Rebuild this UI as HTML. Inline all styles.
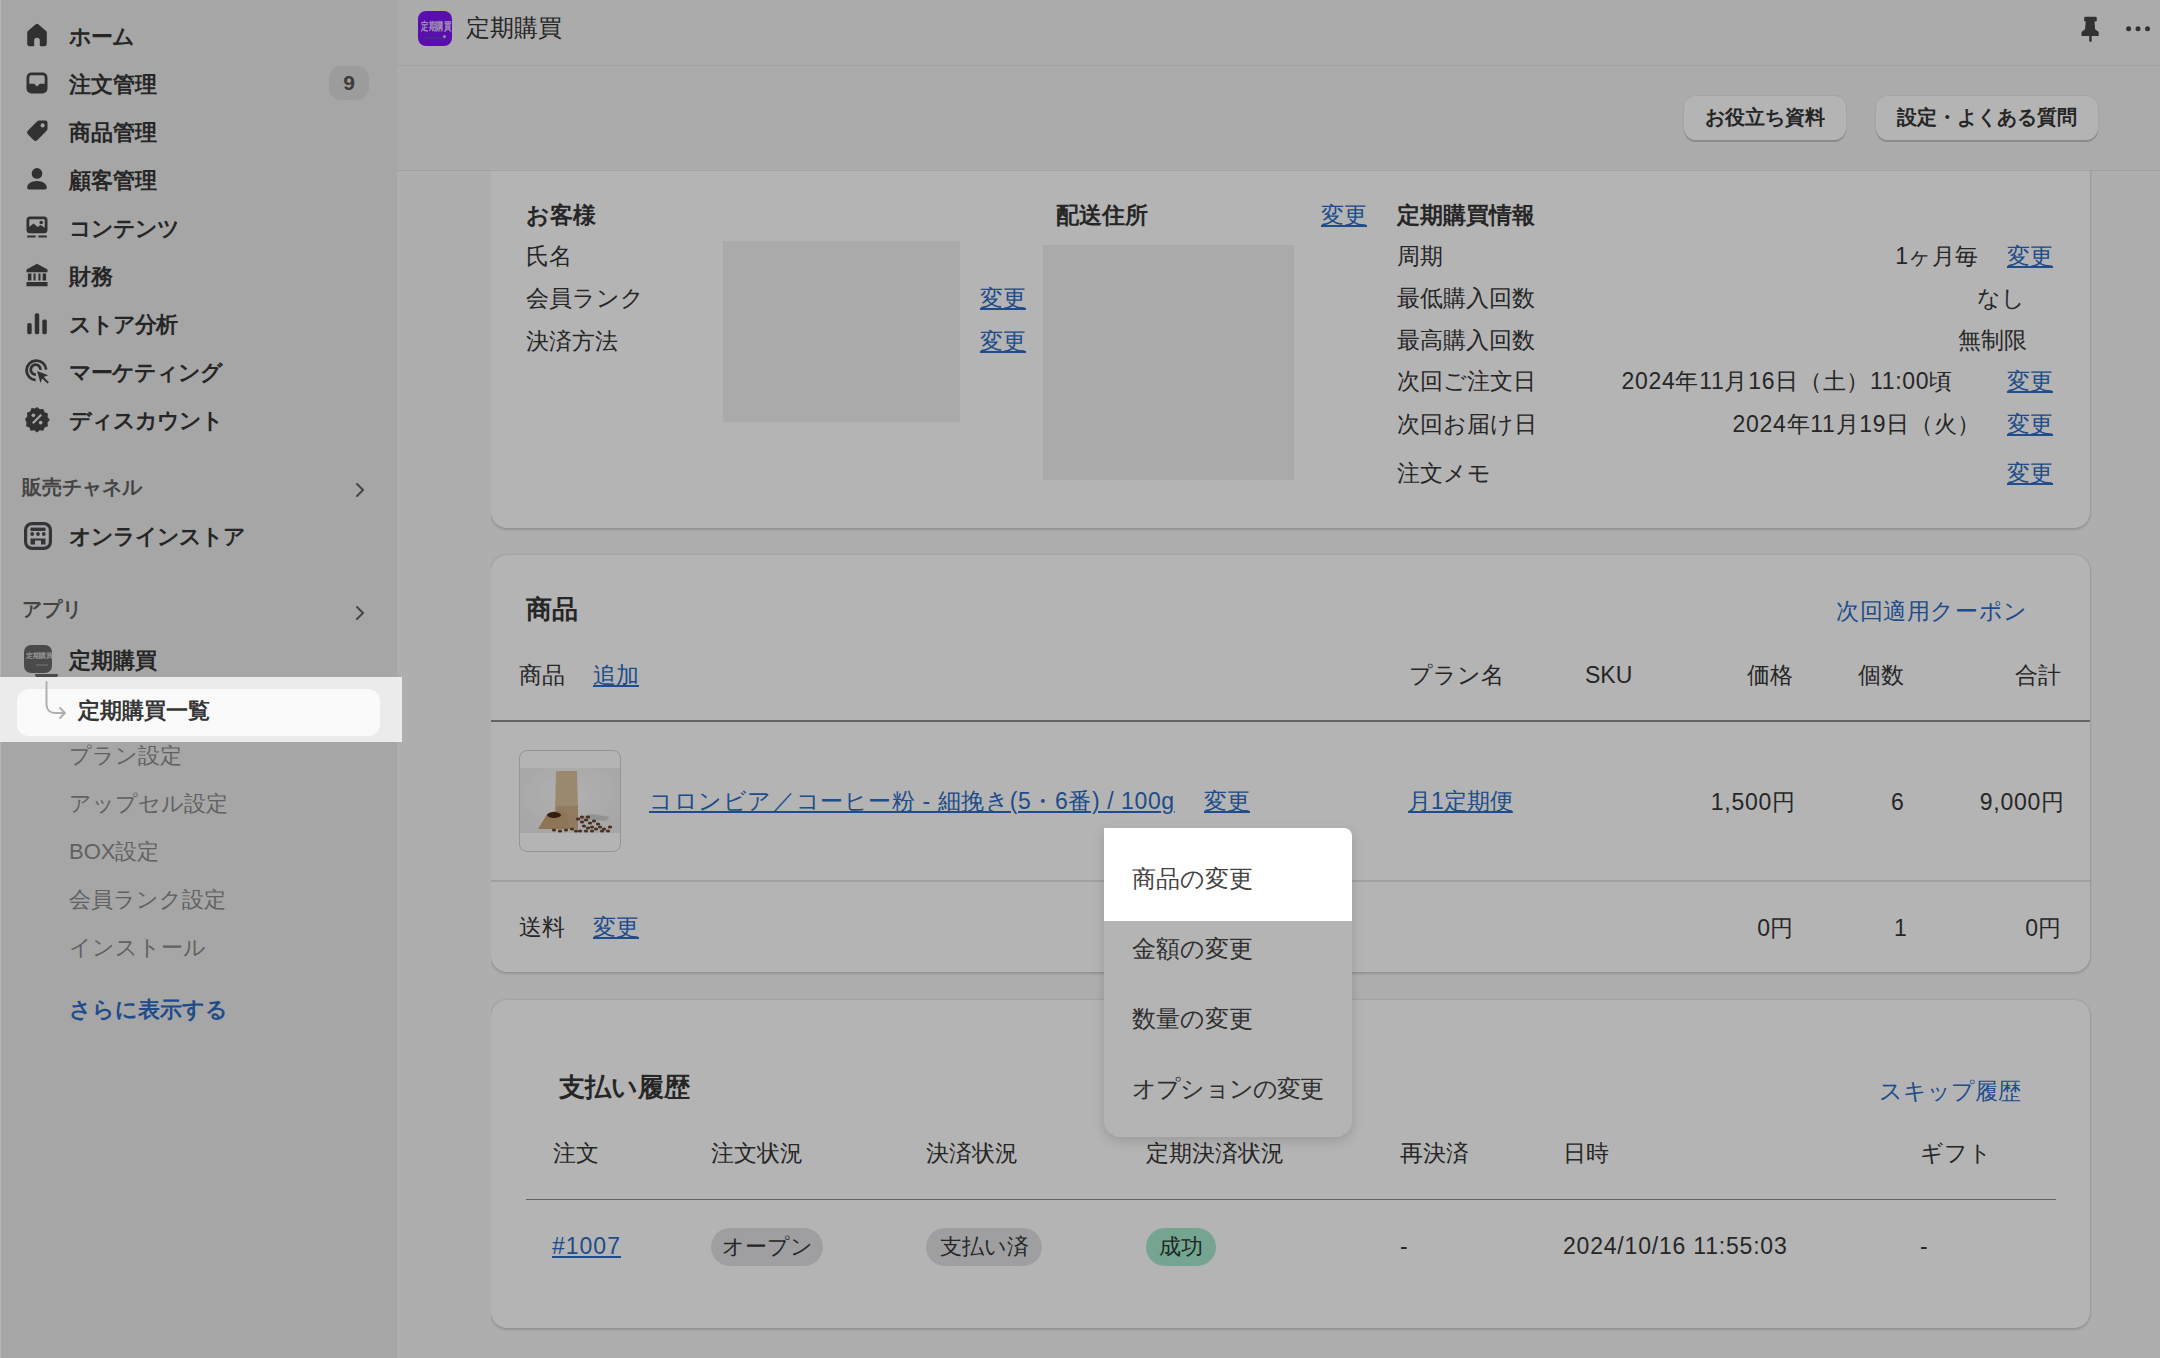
<!DOCTYPE html>
<html><head><meta charset="utf-8">
<style>
*{box-sizing:border-box;margin:0;padding:0}
html,body{width:2164px;height:1358px;overflow:hidden}
body{position:relative;background:#f7f7f7;font-family:"Liberation Sans",sans-serif;color:#363636}
.a{position:absolute}
.t{position:absolute;white-space:nowrap;line-height:32px;height:32px}
.r{text-align:right}
.lk{color:#2d6cc4;text-decoration:underline;text-underline-offset:2px;text-decoration-thickness:1.5px}
.b{font-weight:bold}
.side{left:0;top:0;width:397px;height:1358px;background:#ebebeb}
.card{background:#fff;border-radius:16px;box-shadow:0 0 3px rgba(0,0,0,.16),0 2px 3px rgba(0,0,0,.12)}
.ov{left:0;top:0;width:2164px;height:1358px;background:rgba(0,0,0,.295)}
.st{font-size:22px;font-weight:bold}
.sub{font-size:22px;color:#8a8a8a}
.ct{font-size:23px}
.ic{position:absolute;left:23px;width:28px;height:28px}
.badge{position:absolute;height:38px;border-radius:19px;font-size:22px;line-height:38px;text-align:center}
</style></head><body>

<!-- SIDEBAR -->
<div class="a side"></div>
<div class="a" style="left:0;top:0;width:1.3px;height:1358px;background:#ffffff"></div>

<svg class="ic" style="top:21px" viewBox="0 0 20 20"><path fill="#464646" d="M10.9 2.4a1.4 1.4 0 0 0-1.8 0L3.5 7.2A2 2 0 0 0 3 8.7V16a2 2 0 0 0 2 2h2.5a.5.5 0 0 0 .5-.5V14a2 2 0 1 1 4 0v3.5a.5.5 0 0 0 .5.5H15a2 2 0 0 0 2-2V8.7a2 2 0 0 0-.5-1.5z"/></svg>
<div class="t st" style="left:69px;top:21px;letter-spacing:-1px">ホーム</div>

<svg class="ic" style="top:69px" viewBox="0 0 20 20"><path fill="#464646" fill-rule="evenodd" d="M6 2.5A3.5 3.5 0 0 0 2.5 6v8A3.5 3.5 0 0 0 6 17.5h8a3.5 3.5 0 0 0 3.5-3.5V6A3.5 3.5 0 0 0 14 2.5zM4.5 6A1.5 1.5 0 0 1 6 4.5h8A1.5 1.5 0 0 1 15.5 6v4.5h-3.5L10 12.5 8 10.5H4.5z"/></svg>
<div class="t st" style="left:69px;top:69px">注文管理</div>
<div class="badge" style="left:329px;top:66px;width:40px;height:34px;line-height:34px;border-radius:12px;background:#dedede;color:#555;font-size:21px;font-weight:bold">9</div>

<svg class="ic" style="top:117px" viewBox="0 0 20 20"><path fill="#464646" d="M11.6 2.5H16a1.5 1.5 0 0 1 1.5 1.5v4.4a2 2 0 0 1-.6 1.4l-6.6 6.6a2 2 0 0 1-2.8 0L3.6 12.5a2 2 0 0 1 0-2.8l6.6-6.6a2 2 0 0 1 1.4-.6zM14 7.5a1.5 1.5 0 1 0 0-3 1.5 1.5 0 0 0 0 3z"/></svg>
<div class="t st" style="left:69px;top:117px">商品管理</div>

<svg class="ic" style="top:165px" viewBox="0 0 20 20"><circle fill="#464646" cx="10" cy="6" r="3.8"/><path fill="#464646" d="M3 16.3C3 13.5 6 11.5 10 11.5s7 2 7 4.8c0 .9-.6 1.2-1.3 1.2H4.3c-.7 0-1.3-.3-1.3-1.2z"/></svg>
<div class="t st" style="left:69px;top:165px">顧客管理</div>

<svg class="ic" style="top:213px" viewBox="0 0 20 20"><path fill="#464646" d="M5 2.5h10A2.5 2.5 0 0 1 17.5 5v7A2.5 2.5 0 0 1 15 14.5H5A2.5 2.5 0 0 1 2.5 12V5A2.5 2.5 0 0 1 5 2.5zm0 2a.5.5 0 0 0-.5.5v5l3-2.5 3 2.5 2-1.5 3 2V5a.5.5 0 0 0-.5-.5zm8 1a1.3 1.3 0 1 0 0 2.6 1.3 1.3 0 0 0 0-2.6zM3 16h6v1.5H3zm8 0h6v1.5h-6z"/></svg>
<div class="t st" style="left:69px;top:213px;letter-spacing:-1px">コンテンツ</div>

<svg class="ic" style="top:261px" viewBox="0 0 20 20"><path fill="#464646" d="M10 2l7.5 4v2h-15V6zM3.5 9h2.5v5H3.5zm4 0H9v5H7.5zm3.5 0h1.5v5H11zm3 0h2.5v5H14zM2.5 15h15v3h-15z"/></svg>
<div class="t st" style="left:69px;top:261px">財務</div>

<svg class="ic" style="top:309px" viewBox="0 0 20 20"><rect fill="#464646" x="3" y="10" width="3.2" height="8" rx="1.2"/><rect fill="#464646" x="8.4" y="3" width="3.2" height="15" rx="1.2"/><rect fill="#464646" x="13.8" y="7.5" width="3.2" height="10.5" rx="1.2"/></svg>
<div class="t st" style="left:69px;top:309px;letter-spacing:-1px">ストア分析</div>

<svg class="ic" style="top:357px" viewBox="0 0 20 20"><path fill="none" stroke="#464646" stroke-width="2" d="M16.5 9A7 7 0 1 0 9 16.5M12.5 9.2A3.5 3.5 0 1 0 9.2 12.5"/><path fill="#464646" d="M10 10l8 3-3.2 1.2L18.5 18l-1 1-3.8-3.7L12.5 18.5z"/></svg>
<div class="t st" style="left:69px;top:357px;letter-spacing:-1px">マーケティング</div>

<svg class="ic" style="top:405px" viewBox="0 0 20 20"><path fill="#464646" d="M10 1.5l2 1.6 2.5-.3.9 2.4 2.4.9-.3 2.5 1.6 2-1.6 2 .3 2.5-2.4.9-.9 2.4-2.5-.3-2 1.6-2-1.6-2.5.3-.9-2.4-2.4-.9.3-2.5L1.5 10l1.6-2-.3-2.5 2.4-.9.9-2.4 2.5.3z"/><path fill="none" stroke="#ebebeb" stroke-width="1.6" d="M7 13L13 7"/><circle fill="#ebebeb" cx="7.4" cy="7.4" r="1.3"/><circle fill="#ebebeb" cx="12.6" cy="12.6" r="1.3"/></svg>
<div class="t st" style="left:69px;top:405px;letter-spacing:-1px">ディスカウント</div>

<div class="t" style="left:22px;top:471px;font-size:20px;font-weight:bold;color:#616161">販売チャネル</div>
<svg class="a" style="left:352px;top:481px;width:16px;height:18px" viewBox="0 0 16 18"><path fill="none" stroke="#616161" stroke-width="2" stroke-linecap="round" d="M5 3l6 6-6 6"/></svg>

<svg class="a" style="left:24px;top:522px;width:28px;height:28px" viewBox="0 0 28 28"><rect x="1.6" y="1.6" width="24.8" height="24.8" rx="6.5" fill="none" stroke="#4a4b50" stroke-width="3.2"/><rect x="6.5" y="5.6" width="15" height="3.4" fill="#4a4b50"/><circle cx="8.2" cy="12" r="1.9" fill="#4a4b50"/><circle cx="14" cy="12" r="1.9" fill="#4a4b50"/><circle cx="19.8" cy="12" r="1.9" fill="#4a4b50"/><path d="M6.5 16.5h15v6h-4.5v-4h-6v4H6.5z" fill="#4a4b50"/></svg>
<div class="t st" style="left:69px;top:521px;letter-spacing:-1px">オンラインストア</div>

<div class="t" style="left:22px;top:593px;font-size:20px;font-weight:bold;color:#616161">アプリ</div>
<svg class="a" style="left:352px;top:604px;width:16px;height:18px" viewBox="0 0 16 18"><path fill="none" stroke="#616161" stroke-width="2" stroke-linecap="round" d="M5 3l6 6-6 6"/></svg>

<div class="a" style="left:24px;top:645px;width:28px;height:28px;border-radius:7px;background:#6a6a6a;overflow:hidden"><div class="a" style="left:2px;top:7px;font-size:7px;line-height:8px;color:#cfcfcf;font-weight:bold;letter-spacing:-.5px">定期購買</div><div class="a" style="left:12px;top:19px;width:12px;height:2px;background:#8a8a8a"></div></div>
<div class="a" style="left:35px;top:674px;width:23px;height:4px;border-radius:0 0 4px 4px;background:#6a6a6a"></div>
<div class="t st" style="left:69px;top:645px">定期購買</div>

<div class="t sub" style="left:69px;top:740px">プラン設定</div>
<div class="t sub" style="left:69px;top:788px">アップセル設定</div>
<div class="t sub" style="left:69px;top:836px">BOX設定</div>
<div class="t sub" style="left:69px;top:884px">会員ランク設定</div>
<div class="t sub" style="left:69px;top:932px">インストール</div>
<div class="t st" style="left:69px;top:994px;color:#2d6cc4;font-size:21.5px">さらに表示する</div>

<!-- TOP BARS -->
<div class="a" style="left:397px;top:0;width:1767px;height:169px;background:#f3f3f3"></div>
<div class="a" style="left:397px;top:65px;width:1763px;height:1px;background:#e4e4e4"></div>
<div class="a" style="left:418px;top:11px;width:34px;height:35px;border-radius:8px;background:#7e14f6;overflow:hidden"><div class="a" style="left:3px;top:5px;white-space:nowrap;font-size:7.5px;line-height:14px;height:14px;color:#e2d2ff;font-weight:bold;letter-spacing:-.3px;transform:scaleY(1.5);transform-origin:top left">定期購買</div><div class="a" style="left:7px;top:26px;width:20px;height:2px;background:#5a40c0"></div><div class="a" style="left:25px;top:24px;width:3px;height:3px;border-radius:2px;background:#d0c0f0"></div></div>
<div class="t" style="left:466px;top:12px;font-size:24px">定期購買</div>
<svg class="a" style="left:2078px;top:14px;width:24px;height:28px" viewBox="0 0 24 28"><path fill="#474747" d="M7.5 2.7h10a1.3 1.3 0 0 1 1.3 1.3v2.2a1.3 1.3 0 0 1-1.3 1.3h-1l.6 7.8 3.6 2.6v4.1H13.7v5l-1.2 1.6-1.3-1.6v-5H3.5v-4.1l3.6-2.6.6-7.8h-.2a1.3 1.3 0 0 1-1.3-1.3V4a1.3 1.3 0 0 1 1.3-1.3z"/></svg>
<svg class="a" style="left:2124px;top:22px;width:30px;height:12px" viewBox="0 0 30 12"><circle fill="#474747" cx="4.6" cy="6.7" r="2.5"/><circle fill="#474747" cx="14" cy="6.7" r="2.5"/><circle fill="#474747" cx="23.5" cy="6.7" r="2.5"/></svg>

<div class="a" style="left:1684px;top:96px;width:162px;height:44px;border-radius:12px;background:#ffffff;box-shadow:0 2px 0 #c4c4c4,0 0 1px 1px #e8e8e8"></div>
<div class="t b" style="left:1684px;top:101px;width:162px;text-align:center;font-size:20px">お役立ち資料</div>
<div class="a" style="left:1876px;top:96px;width:222px;height:44px;border-radius:12px;background:#ffffff;box-shadow:0 2px 0 #c4c4c4,0 0 1px 1px #e8e8e8"></div>
<div class="t b" style="left:1876px;top:101px;width:222px;text-align:center;font-size:20px">設定・よくある質問</div>

<!-- CARD 1 (top clipped) -->
<div class="a" style="left:491px;top:170px;width:1603px;height:1188px;overflow:hidden">
  <div class="a card" style="left:0;top:-40px;width:1599px;height:398px"></div>
  <div class="a card" style="left:0;top:385px;width:1599px;height:417px"></div>
  <div class="a card" style="left:0;top:830px;width:1599px;height:328px"></div>
</div>

<div class="a" style="left:397px;top:169.5px;width:1767px;height:1.5px;background:#e4e4e4"></div>
<div class="t ct b" style="left:526px;top:199px">お客様</div>
<div class="t ct" style="left:526px;top:240px">氏名</div>
<div class="t ct" style="left:526px;top:282px">会員ランク</div>
<div class="t ct" style="left:526px;top:325px">決済方法</div>
<div class="a" style="left:723px;top:241px;width:237px;height:181px;background:#f1f1f1"></div>
<div class="t ct lk" style="left:980px;top:282px">変更</div>
<div class="t ct lk" style="left:980px;top:325px">変更</div>
<div class="t ct b" style="left:1056px;top:199px">配送住所</div>
<div class="t ct lk" style="left:1321px;top:199px">変更</div>
<div class="a" style="left:1043px;top:245px;width:251px;height:235px;background:#f1f1f1"></div>

<div class="t ct b" style="left:1397px;top:199px">定期購買情報</div>
<div class="t ct" style="left:1397px;top:240px">周期</div>
<div class="t ct" style="left:1397px;top:282px">最低購入回数</div>
<div class="t ct" style="left:1397px;top:324px">最高購入回数</div>
<div class="t ct" style="left:1397px;top:365px">次回ご注文日</div>
<div class="t ct" style="left:1397px;top:408px">次回お届け日</div>
<div class="t ct" style="left:1397px;top:457px">注文メモ</div>
<div class="t ct r" style="right:186px;top:240px">1ヶ月毎</div>
<div class="t ct r" style="right:139px;top:282px">なし</div>
<div class="t ct r" style="right:137px;top:324px">無制限</div>
<div class="t ct r" style="right:211px;top:365px;letter-spacing:.7px">2024年11月16日（土）11:00頃</div>
<div class="t ct r" style="right:183px;top:408px;letter-spacing:.7px">2024年11月19日（火）</div>
<div class="t ct lk" style="left:2007px;top:240px">変更</div>
<div class="t ct lk" style="left:2007px;top:365px">変更</div>
<div class="t ct lk" style="left:2007px;top:408px">変更</div>
<div class="t ct lk" style="left:2007px;top:457px">変更</div>

<!-- CARD 2 -->
<div class="t b" style="left:526px;top:593px;font-size:26px">商品</div>
<div class="t ct" style="left:1836px;top:595px;color:#2d6cc4;letter-spacing:.6px">次回適用クーポン</div>
<div class="t ct" style="left:519px;top:659px">商品</div>
<div class="t ct lk" style="left:593px;top:659px">追加</div>
<div class="t ct" style="left:1409px;top:659px">プラン名</div>
<div class="t ct" style="left:1585px;top:659px">SKU</div>
<div class="t ct r" style="right:371px;top:659px">価格</div>
<div class="t ct" style="left:1858px;top:659px">個数</div>
<div class="t ct r" style="right:103px;top:659px">合計</div>
<div class="a" style="left:491px;top:720px;width:1599px;height:2px;background:#8e8e8e"></div>
<div class="a" style="left:519px;top:750px;width:102px;height:102px;border:1.5px solid #d4d4d4;border-radius:8px;background:#fff;overflow:hidden">
  <svg class="a" style="left:0;top:0" width="100" height="100" viewBox="0 0 100 100">
    <defs><radialGradient id="bg" cx="50%" cy="40%" r="65%"><stop offset="0" stop-color="#fbfbfb"/><stop offset="1" stop-color="#ececec"/></radialGradient></defs>
    <rect x="0" y="17" width="100" height="65" fill="url(#bg)"/>
    <path d="M36 20h21l1 40v18H36l-1-18z" fill="#dcc29c"/>
    <path d="M36 55h22v23H36z" fill="#b89a70" opacity=".45"/>
    <path d="M18 78l8-13c3-4 12-7 18-4l4 4 1 13z" fill="#c8a87c"/>
    <ellipse cx="34" cy="64" rx="7" ry="3" fill="#4a2a18"/>
    <path d="M58 66l14-3 18 3-4 4-14-1-14 1z" fill="#cfcfcf"/>
    <ellipse cx="58" cy="68" rx="2.2" ry="1.5" fill="#6e4430"/><ellipse cx="62" cy="71" rx="2.2" ry="1.5" fill="#6e4430"/><ellipse cx="66" cy="69" rx="2.2" ry="1.5" fill="#6e4430"/><ellipse cx="70" cy="72" rx="2.2" ry="1.5" fill="#6e4430"/><ellipse cx="74" cy="70" rx="2.2" ry="1.5" fill="#6e4430"/><ellipse cx="78" cy="73" rx="2.2" ry="1.5" fill="#6e4430"/><ellipse cx="64" cy="75" rx="2.2" ry="1.5" fill="#6e4430"/><ellipse cx="68" cy="77" rx="2.2" ry="1.5" fill="#6e4430"/><ellipse cx="72" cy="76" rx="2.2" ry="1.5" fill="#6e4430"/><ellipse cx="76" cy="78" rx="2.2" ry="1.5" fill="#6e4430"/><ellipse cx="80" cy="76" rx="2.2" ry="1.5" fill="#6e4430"/><ellipse cx="84" cy="78" rx="2.2" ry="1.5" fill="#6e4430"/><ellipse cx="88" cy="80" rx="2.2" ry="1.5" fill="#6e4430"/><ellipse cx="52" cy="78" rx="2.2" ry="1.5" fill="#6e4430"/><ellipse cx="56" cy="80" rx="2.2" ry="1.5" fill="#6e4430"/><ellipse cx="46" cy="79" rx="2.2" ry="1.5" fill="#6e4430"/><ellipse cx="40" cy="80" rx="2.2" ry="1.5" fill="#6e4430"/><ellipse cx="34" cy="79" rx="2.2" ry="1.5" fill="#6e4430"/><ellipse cx="60" cy="80" rx="2.2" ry="1.5" fill="#6e4430"/><ellipse cx="66" cy="80" rx="2.2" ry="1.5" fill="#6e4430"/><ellipse cx="72" cy="80" rx="2.2" ry="1.5" fill="#6e4430"/><ellipse cx="82" cy="80" rx="2.2" ry="1.5" fill="#6e4430"/><ellipse cx="90" cy="76" rx="2.2" ry="1.5" fill="#6e4430"/><ellipse cx="62" cy="66" rx="2.2" ry="1.5" fill="#6e4430"/><ellipse cx="68" cy="66" rx="2.2" ry="1.5" fill="#6e4430"/>
  </svg>
</div>
<div class="t ct lk" style="left:649px;top:785px;letter-spacing:.6px">コロンビア／コーヒー粉 - 細挽き(5・6番) / 100g</div>
<div class="t ct lk" style="left:1204px;top:785px">変更</div>
<div class="t ct lk" style="left:1408px;top:785px">月1定期便</div>
<div class="t ct r" style="right:368px;top:786px;letter-spacing:.8px">1,500円</div>
<div class="t ct" style="left:1891px;top:786px">6</div>
<div class="t ct r" style="right:99px;top:786px;letter-spacing:.8px">9,000円</div>
<div class="a" style="left:491px;top:880px;width:1599px;height:1.5px;background:#e3e3e3"></div>
<div class="t ct" style="left:519px;top:911px">送料</div>
<div class="t ct lk" style="left:593px;top:911px">変更</div>
<div class="t ct r" style="right:371px;top:912px">0円</div>
<div class="t ct" style="left:1894px;top:912px">1</div>
<div class="t ct r" style="right:103px;top:912px">0円</div>

<!-- CARD 3 -->
<div class="t b" style="left:559px;top:1071px;font-size:26px">支払い履歴</div>
<div class="t ct" style="left:1879px;top:1075px;color:#2d6cc4">スキップ履歴</div>
<div class="t ct" style="left:553px;top:1137px">注文</div>
<div class="t ct" style="left:711px;top:1137px">注文状況</div>
<div class="t ct" style="left:926px;top:1137px">決済状況</div>
<div class="t ct" style="left:1146px;top:1137px">定期決済状況</div>
<div class="t ct" style="left:1400px;top:1137px">再決済</div>
<div class="t ct" style="left:1563px;top:1137px">日時</div>
<div class="t ct" style="left:1920px;top:1137px">ギフト</div>
<div class="a" style="left:526px;top:1198.5px;width:1530px;height:1.6px;background:#8e8e8e"></div>
<div class="t ct lk" style="left:552px;top:1230px;letter-spacing:1px">#1007</div>
<div class="badge" style="left:711px;top:1228px;width:112px;background:#e1e2e6">オープン</div>
<div class="badge" style="left:926px;top:1228px;width:116px;background:#e1e2e6">支払い済</div>
<div class="badge" style="left:1146px;top:1228px;width:70px;background:#a6e8cc;color:#2a3a32">成功</div>
<div class="t ct" style="left:1400px;top:1230px">-</div>
<div class="t ct" style="left:1563px;top:1230px;letter-spacing:.8px">2024/10/16 11:55:03</div>
<div class="t ct" style="left:1920px;top:1230px">-</div>

<!-- POPOVER -->
<div class="a" style="left:1104px;top:828px;width:248px;height:309px;background:#fff;border-radius:0 8px 16px 16px;box-shadow:0 4px 12px rgba(0,0,0,.15)"></div>
<div class="t" style="left:1132px;top:933px;font-size:24px;color:#444">金額の変更</div>
<div class="t" style="left:1132px;top:1003px;font-size:24px;color:#444">数量の変更</div>
<div class="t" style="left:1132px;top:1073px;font-size:24px;color:#444;letter-spacing:-.8px">オプションの変更</div>

<!-- OVERLAY -->
<div class="a ov"></div>
<div class="a" style="left:2160px;top:0;width:4px;height:1358px;background:#fff"></div>

<!-- HIGHLIGHT: sidebar -->
<div class="a" style="left:0;top:677px;width:402px;height:65px;background:#ebebeb;overflow:hidden">
  <div class="a" style="left:17px;top:12px;width:363px;height:47px;border-radius:12px;background:#fafafa"></div>
  <svg class="a" style="left:38px;top:0;width:32px;height:46px" viewBox="0 0 32 46"><path fill="none" stroke="#b0b0b0" stroke-width="2" stroke-linecap="round" stroke-linejoin="round" d="M8.5 5v23a8 8 0 0 0 8 8h10M22 31l5 5-5 5"/></svg>
  <div class="t" style="left:78px;top:18px;font-size:22px;font-weight:bold">定期購買一覧</div>
</div>
<!-- HIGHLIGHT: menu item -->
<div class="a" style="left:1104px;top:828px;width:248px;height:93px;background:#fff;border-radius:0 8px 0 0">
  <div class="t" style="left:28px;top:35px;font-size:24px;color:#444">商品の変更</div>
</div>

</body></html>
